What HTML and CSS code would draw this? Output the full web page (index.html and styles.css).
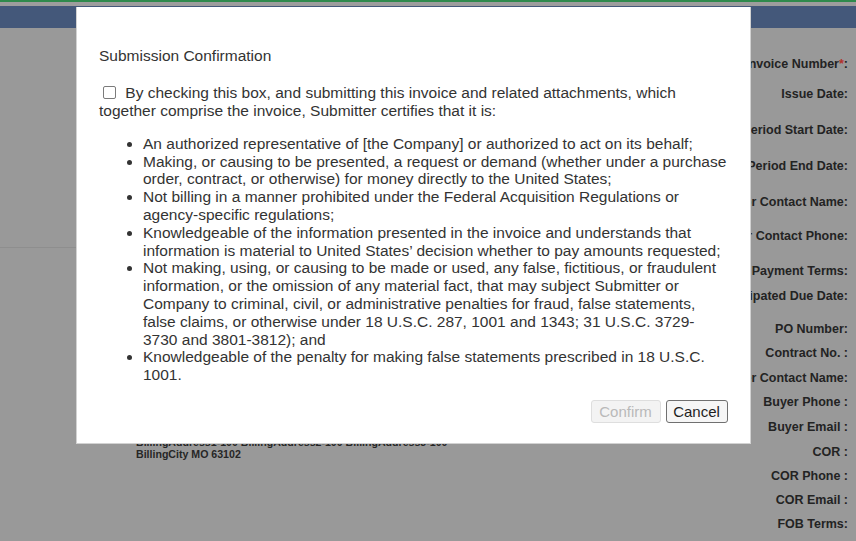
FILE: index.html
```html
<!DOCTYPE html>
<html lang="en">
<head>
<meta charset="utf-8">
<title>Submission Confirmation</title>
<link rel="stylesheet" href="styles.css">
</head>
<body>
<div class="page">
  <div class="topline"></div>
  <div class="topgap"></div>
  <div class="navbar"></div>
  <div class="main">
    <div class="leftcol">
      <div class="sep"></div>
      <div class="address">
        <div>BillingAddress1-100 BillingAddress2-100 BillingAddress3-100</div>
        <div>BillingCity MO 63102</div>
      </div>
    </div>
    <div class="fields">
      <div class="f h30">Invoice Number<span class="req">*</span>:</div>
      <div class="f h36">Issue Date:</div>
      <div class="f h36">Period Start Date:</div>
      <div class="f h36">Period End Date:</div>
      <div class="f h34">Vendor Contact Name:</div>
      <div class="f h35">Vendor Contact Phone:</div>
      <div class="f h25">Payment Terms:</div>
      <div class="f h33">Anticipated Due Date:</div>
      <div class="f h24">PO Number:</div>
      <div class="f h24-5">Contract No. :</div>
      <div class="f h24-5">Buyer Contact Name:</div>
      <div class="f h25">Buyer Phone :</div>
      <div class="f h25">Buyer Email :</div>
      <div class="f h24">COR :</div>
      <div class="f h24">COR Phone :</div>
      <div class="f h24">COR Email :</div>
      <div class="f h24">FOB Terms:</div>
    </div>
  </div>

  <div class="modal">
    <div class="title">Submission Confirmation</div>
    <p class="cert"><input type="checkbox" class="chk"> By checking this box, and submitting this invoice and related attachments, which together comprise the invoice, Submitter certifies that it is:</p>
    <ul class="items">
      <li>An authorized representative of [the Company] or authorized to act on its behalf;</li>
      <li>Making, or causing to be presented, a request or demand (whether under a purchase order, contract, or otherwise) for money directly to the United States;</li>
      <li>Not billing in a manner prohibited under the Federal Acquisition Regulations or agency-specific regulations;</li>
      <li>Knowledgeable of the information presented in the invoice and understands that information is material to United States’ decision whether to pay amounts requested;</li>
      <li>Not making, using, or causing to be made or used, any false, fictitious, or fraudulent information, or the omission of any material fact, that may subject Submitter or Company to criminal, civil, or administrative penalties for fraud, false statements, false claims, or otherwise under 18 U.S.C. 287, 1001 and 1343; 31 U.S.C. 3729-3730 and 3801-3812); and</li>
      <li>Knowledgeable of the penalty for making false statements prescribed in 18 U.S.C. 1001.</li>
    </ul>
    <div class="actions">
      <button class="btn btn-confirm" disabled>Confirm</button>
      <button class="btn btn-cancel">Cancel</button>
    </div>
  </div>
</div>
</body>
</html>
```

FILE: styles.css
```css
html, body {
  margin: 0;
  padding: 0;
}
body {
  background: #999999;
  font-family: "Liberation Sans", Arial, sans-serif;
  width: 856px;
  height: 541px;
  overflow: hidden;
}
.page {
  position: relative;
  width: 856px;
  height: 541px;
  display: flex;
  flex-direction: column;
}
.topline {
  height: 2px;
  background: #2f8a4c;
}
.topgap {
  height: 5px;
  background: #9d9d9d;
}
.navbar {
  height: 26px;
  background: #44587a;
}
.main {
  flex: 1;
  display: flex;
}
.leftcol {
  flex: 1;
  display: flex;
  flex-direction: column;
}
.sep {
  margin-top: 219px;
  border-top: 1px solid #8e8e8e;
  width: 100%;
}
.address {
  margin-top: 188px;
  padding-left: 136px;
  font-size: 10.6px;
  font-weight: bold;
  line-height: 12.5px;
  color: #262626;
}
.fields {
  width: 200px;
  padding: 29.5px 8px 0 0;
  display: flex;
  flex-direction: column;
  align-items: flex-end;
}
.f {
  font-size: 12.5px;
  font-weight: bold;
  line-height: 15px;
  color: #232323;
  white-space: nowrap;
  text-align: right;
  flex: none;
}
.req { color: #b3302c; }
.h24 { height: 24px; }
.h24-5 { height: 24.5px; }
.h25 { height: 25px; }
.h30 { height: 30px; }
.h33 { height: 33px; }
.h34 { height: 34px; }
.h35 { height: 35px; }
.h36 { height: 36px; }

.modal {
  position: absolute;
  left: 76px;
  top: 7px;
  width: 675px;
  height: 437px;
  box-sizing: border-box;
  background: #ffffff;
  border: 1px solid #d2d2d2;
  border-top: none;
  padding: 40px 22.5px 0 22px;
  color: #333333;
  font-size: 15.5px;
  line-height: 17.8px;
}
.title {
  margin: 0;
}
.cert {
  margin: 19px 0 0 0;
}
.chk {
  -webkit-appearance: none;
  appearance: none;
  width: 13px;
  height: 13px;
  box-sizing: border-box;
  border: 1px solid #7b7b7b;
  border-radius: 2px;
  background: #fff;
  margin: 0 5px 0 4px;
  vertical-align: -1px;
}
.items {
  margin: 15.5px 0 15.5px 0;
  padding-left: 44px;
}
.items li {
  padding: 0;
}
.actions {
  display: flex;
  justify-content: flex-end;
  gap: 5px;
  padding-right: 0;
}
.btn {
  height: 23px;
  box-sizing: border-box;
  font-family: "Liberation Sans", Arial, sans-serif;
  font-size: 15px;
  line-height: 19px;
  padding: 0;
  border-radius: 3px;
  text-align: center;
}
.btn-confirm {
  width: 70px;
  background: #f3f3f3;
  border: 1px solid #dedede;
  color: #b9b9b9;
}
.btn-cancel {
  width: 62px;
  background: #f6f6f6;
  border: 1px solid #707070;
  color: #1f1f1f;
}
```
